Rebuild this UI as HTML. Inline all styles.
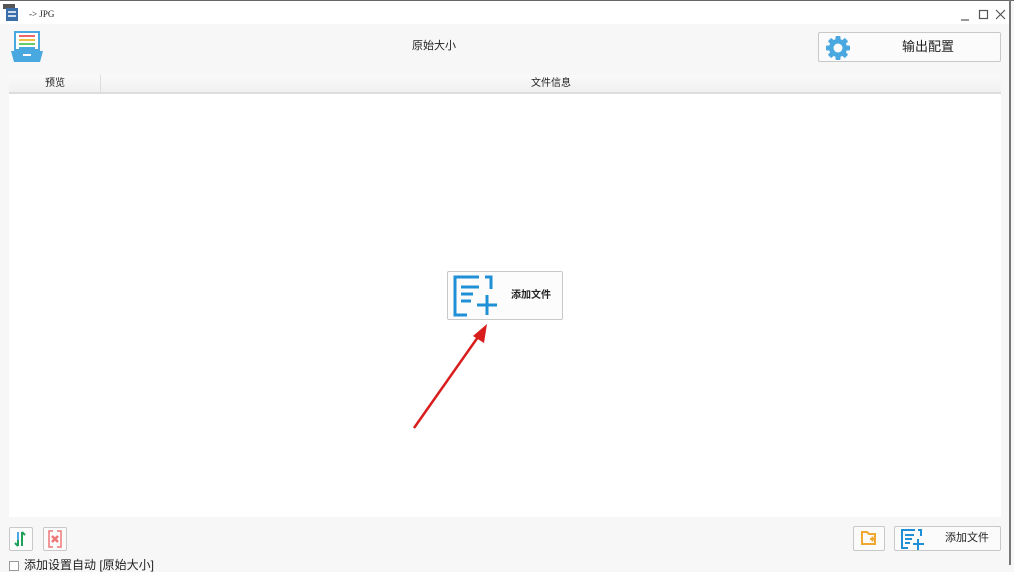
<!DOCTYPE html>
<html><head><meta charset="utf-8"><style>
*{margin:0;padding:0;box-sizing:border-box}
body{width:1014px;height:565px;overflow:hidden;background:#f7f7f7;font-family:"Liberation Sans","Noto Sans CJK SC",sans-serif;font-size:11px;line-height:1;color:#222;position:relative}
.abs{position:absolute;white-space:nowrap}
.btn{position:absolute;background:#fbfbfb;border:1px solid #c8c8c8;border-radius:2px}
</style></head><body>
<div class="abs" style="left:0;top:0;width:1014px;height:1px;background:#666"></div>
<div class="abs" style="left:1009px;top:0;width:2px;height:565px;background:#777"></div>
<div class="abs" style="left:0;top:1px;width:1009px;height:23px;background:#fff"></div>
<svg class="abs" style="left:3px;top:4px" width="16" height="18"><rect x="0" y="0" width="12" height="5" fill="#555"/><rect x="3" y="4" width="12" height="13" fill="#3a6ea8"/><rect x="5" y="7" width="8" height="2" fill="#cde"/><rect x="5" y="11" width="8" height="2" fill="#cde"/></svg>
<div class="abs" style="left:29px;top:10px;font-size:9px;font-family:'Liberation Serif',serif">-&gt; JPG</div>
<svg class="abs" style="left:958px;top:8px" width="50" height="14"><path d="M3 12h8" stroke="#555" stroke-width="1.2"/><rect x="21.5" y="2.5" width="8" height="8" fill="none" stroke="#555" stroke-width="1.2"/><path d="M38 2l9 9M47 2l-9 9" stroke="#555" stroke-width="1.2"/></svg>
<div class="abs" style="left:11px;top:30px"><svg width="32" height="34"><path d="M4 2h24v18H4z" fill="#fff" stroke="#4aa8e0" stroke-width="2"/><rect x="8" y="5" width="16" height="2" fill="#e66"/><rect x="8" y="9" width="16" height="2" fill="#f0c040"/><rect x="8" y="13" width="16" height="2" fill="#6c6"/><rect x="8" y="17" width="16" height="2" fill="#4aa8e0"/><path d="M0 21h32l-3 11H3z" fill="#4aa8e0"/><rect x="12" y="24" width="8" height="2" fill="#fff"/></svg></div>
<div class="abs" style="left:412px;top:41px">原始大小</div>
<div class="btn" style="left:818px;top:32px;width:183px;height:30px">
<svg class="abs" style="left:6px;top:2px" width="26" height="26" viewBox="0 0 26 26"><g fill="#4aa8e0"><circle cx="13" cy="13" r="9"/><rect x="10.5" y="1" width="5" height="24" rx="1"/><rect x="10.5" y="1" width="5" height="24" rx="1" transform="rotate(45 13 13)"/><rect x="10.5" y="1" width="5" height="24" rx="1" transform="rotate(90 13 13)"/><rect x="10.5" y="1" width="5" height="24" rx="1" transform="rotate(135 13 13)"/></g><circle cx="13" cy="13" r="4.5" fill="#fbfbfb"/></svg>
<div class="abs" style="left:83px;top:7px;font-size:13px">输出配置</div></div>
<div class="abs" style="left:9px;top:75px;width:992px;height:442px;background:#fff"></div>
<div class="abs" style="left:9px;top:75px;width:992px;height:19px;background:linear-gradient(#fafafa,#f0f0f0);border-bottom:2px solid #ddd"></div>
<div class="abs" style="left:100px;top:75px;width:1px;height:17px;background:#ddd"></div>
<div class="abs" style="left:45px;top:79px;font-size:10px">预览</div>
<div class="abs" style="left:531px;top:79px;font-size:10px">文件信息</div>
<div class="btn" style="left:447px;top:271px;width:116px;height:49px;background:#fcfcfc">
<svg class="abs" style="left:5px;top:3px" width="44" height="42"><path d="M26 2H2v38h12" fill="none" stroke="#1f8fd6" stroke-width="3"/><path d="M32 2h6v12" fill="none" stroke="#1f8fd6" stroke-width="3"/><path d="M8 12h18M8 19h12M8 26h10M34 20v20M24 30h20" stroke="#1f8fd6" stroke-width="3"/></svg>
<div class="abs" style="left:63px;top:19px;font-size:10px;font-weight:bold">添加文件</div></div>
<svg class="abs" style="left:405px;top:315px" width="90" height="120"><path d="M9 113L73 22" stroke="#d91c1c" stroke-width="2.5"/><path d="M82 9L68 21l11 7z" fill="#d91c1c"/></svg>
<div class="btn" style="left:9px;top:527px;width:24px;height:24px"><svg width="22" height="22"><path d="M8 4v14M5 15l3 3M12 4v14M15 7l-3-3" stroke="#1fa05a" stroke-width="2"/><path d="M8 4v8" stroke="#4aa8e0" stroke-width="2"/></svg></div>
<div class="btn" style="left:43px;top:527px;width:24px;height:24px"><svg width="22" height="22"><path d="M9 3H5v16h4M13 3h4v16h-4" fill="none" stroke="#e77" stroke-width="1.5"/><path d="M8 8l6 6M14 8l-6 6" stroke="#e77" stroke-width="2.5"/></svg></div>
<div class="abs" style="left:9px;top:561px;width:10px;height:10px;border:1px solid #999;background:#fff"></div>
<div class="abs" style="left:24px;top:559px;font-size:12px">添加设置自动 [原始大小]</div>
<div class="btn" style="left:853px;top:526px;width:32px;height:25px"><svg width="30" height="23"><path d="M8 5h5l2 2h6v10H8z" fill="none" stroke="#f0a830" stroke-width="2"/><path d="M16 12h5M18.5 9.5v5" stroke="#f0a830" stroke-width="2"/></svg></div>
<div class="btn" style="left:894px;top:526px;width:107px;height:25px">
<svg class="abs" style="left:6px;top:2px" width="24" height="21"><path d="M14 1H1v18h6M17 1h3v6" fill="none" stroke="#1f8fd6" stroke-width="2"/><path d="M4 6h9M4 10h7M4 14h5M17 10v11M12 15h11" stroke="#1f8fd6" stroke-width="2"/></svg>
<div class="abs" style="left:50px;top:6px;font-size:11px">添加文件</div></div>
</body></html>
